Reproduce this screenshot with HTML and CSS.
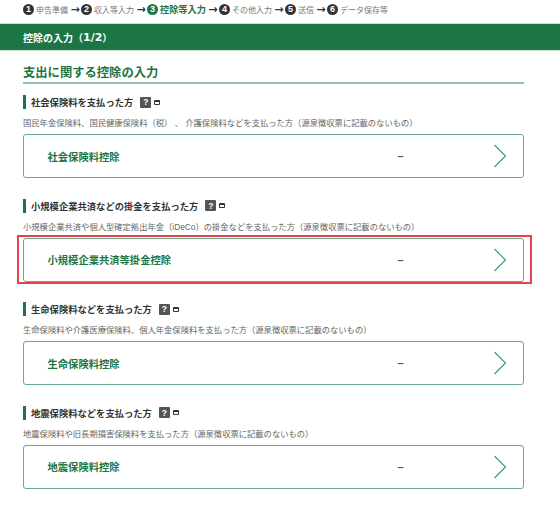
FILE: index.html
```html
<!DOCTYPE html>
<html lang="ja">
<head>
<meta charset="utf-8">
<title>控除の入力</title>
<link rel="stylesheet" href="styles.css">
</head>
<body>
<ol class="steps">
  <li class="step"><span class="num">1</span>申告準備</li><li class="arrow">→</li>
  <li class="step"><span class="num">2</span>収入等入力</li><li class="arrow">→</li>
  <li class="step current"><span class="num">3</span>控除等入力</li><li class="arrow">→</li>
  <li class="step"><span class="num">4</span>その他入力</li><li class="arrow">→</li>
  <li class="step"><span class="num">5</span>送信</li><li class="arrow">→</li>
  <li class="step"><span class="num">6</span>データ保存等</li>
</ol>
<header class="band">控除の入力（<span class="frac">1/2</span>）</header>
<main class="content">
  <h1 class="title">支出に関する控除の入力</h1>

  <section class="group">
    <h2 class="head">社会保険料を支払った方<span class="help">?</span><span class="win"></span></h2>
    <p class="desc">国民年金保険料、国民健康保険料（税） 、 介護保険料などを支払った方（源泉徴収票に記載のないもの）</p>
    <a class="card"><span class="name">社会保険料控除</span><span class="val">–</span><svg class="chev" viewBox="0 0 14 24"><path d="M1.5 1 L12.5 12 L1.5 23"/></svg></a>
  </section>

  <section class="group">
    <h2 class="head">小規模企業共済などの掛金を支払った方<span class="help">?</span><span class="win"></span></h2>
    <p class="desc">小規模企業共済や個人型確定拠出年金（iDeCo）の掛金などを支払った方（源泉徴収票に記載のないもの）</p>
    <a class="card marked"><span class="name">小規模企業共済等掛金控除</span><span class="val">–</span><svg class="chev" viewBox="0 0 14 24"><path d="M1.5 1 L12.5 12 L1.5 23"/></svg></a>
  </section>

  <section class="group">
    <h2 class="head">生命保険料などを支払った方<span class="help">?</span><span class="win"></span></h2>
    <p class="desc">生命保険料や介護医療保険料、個人年金保険料を支払った方（源泉徴収票に記載のないもの）</p>
    <a class="card"><span class="name">生命保険料控除</span><span class="val">–</span><svg class="chev" viewBox="0 0 14 24"><path d="M1.5 1 L12.5 12 L1.5 23"/></svg></a>
  </section>

  <section class="group">
    <h2 class="head">地震保険料などを支払った方<span class="help">?</span><span class="win"></span></h2>
    <p class="desc">地震保険料や旧長期損害保険料を支払った方（源泉徴収票に記載のないもの）</p>
    <a class="card"><span class="name">地震保険料控除</span><span class="val">–</span><svg class="chev" viewBox="0 0 14 24"><path d="M1.5 1 L12.5 12 L1.5 23"/></svg></a>
  </section>
</main>
</body>
</html>
```
FILE: styles.css
```css
* { box-sizing: border-box; }
html, body { margin: 0; padding: 0; }
body {
  width: 560px;
  height: 505px;
  overflow: hidden;
  background: #fff;
  color: #555;
  font-family: "Liberation Sans", "Noto Sans CJK JP", sans-serif;
}
.steps {
  display: flex;
  align-items: center;
  height: 18px;
  margin: 0;
  padding: 0 0 0 23px;
  list-style: none;
  font-size: 8px;
  color: #777;
  white-space: nowrap;
}
.step { display: flex; align-items: center; }
.num {
  display: flex;
  align-items: center;
  justify-content: center;
  width: 11px;
  height: 11px;
  margin-right: 2px;
  border-radius: 50%;
  background: #333;
  color: #fff;
  font-size: 9px;
  font-weight: 700;
}
.arrow {
  width: 10px;
  margin: 0 1px 0 2px;
  color: #333;
  font-family: "DejaVu Sans", sans-serif;
  font-size: 11px;
  font-weight: 700;
  text-align: center;
  line-height: 11px;
}
.current { color: #1b7544; font-size: 9.2px; font-weight: 700; }
.current .num { background: #1b7544; }
.band {
  display: flex;
  align-items: center;
  height: 28px;
  margin-top: 5px;
  padding-left: 23px;
  background: #1b7544;
  border-top: 1px solid #cfe0d6;
  border-bottom: 1px solid #cfe0d6;
  color: #fff;
  font-size: 10px;
  font-weight: 700;
}
.frac { font-family: "DejaVu Sans", sans-serif; font-size: 11px; }
.content { padding: 0 36px 0 23px; }
.title {
  height: 33px;
  margin: 0;
  padding-top: 12px;
  border-bottom: 2px solid #92c3a9;
  color: #1b7544;
  font-size: 12.3px;
  font-weight: 700;
  line-height: 20px;
}
.group { margin-bottom: 20.67px; }
.group:first-of-type { margin-top: 11px; }
.head {
  display: flex;
  align-items: center;
  height: 14px;
  margin: 0;
  padding-left: 5px;
  border-left: 3px solid #1b7544;
  color: #333;
  font-size: 9.3px;
  font-weight: 700;
}
.help {
  display: flex;
  align-items: center;
  justify-content: center;
  width: 11px;
  height: 11px;
  margin-left: 7px;
  background: #555;
  color: #fff;
  font-size: 8.5px;
  border-radius: 1px;
}
.win {
  width: 6px;
  height: 5px;
  margin-left: 3px;
  border: 1px solid #333;
  border-top-width: 2px;
  border-radius: 1px;
}
.desc {
  height: 11px;
  margin: 9px 0 5px;
  color: #666;
  font-size: 8.3px;
  line-height: 11px;
  white-space: nowrap;
}
.card {
  position: relative;
  display: flex;
  align-items: center;
  height: 44px;
  padding-left: 23.5px;
  background: #fff;
  border: 1.5px solid #6aa98a;
  border-radius: 3px;
}
.marked::after {
  content: "";
  position: absolute;
  inset: -3.5px -8.5px -3.5px -7.5px;
  border: 2px solid #e8404d;
  pointer-events: none;
}
.name {
  flex: 1;
  color: #1b7544;
  font-size: 10.3px;
  font-weight: 700;
}
.val { width: 95px; color: #555; font-size: 11px; font-weight: 700; }
.chev { width: 14px; height: 24px; margin-right: 16.5px; }
.chev path { fill: none; stroke: #3f9a6e; stroke-width: 1.1; }
```
